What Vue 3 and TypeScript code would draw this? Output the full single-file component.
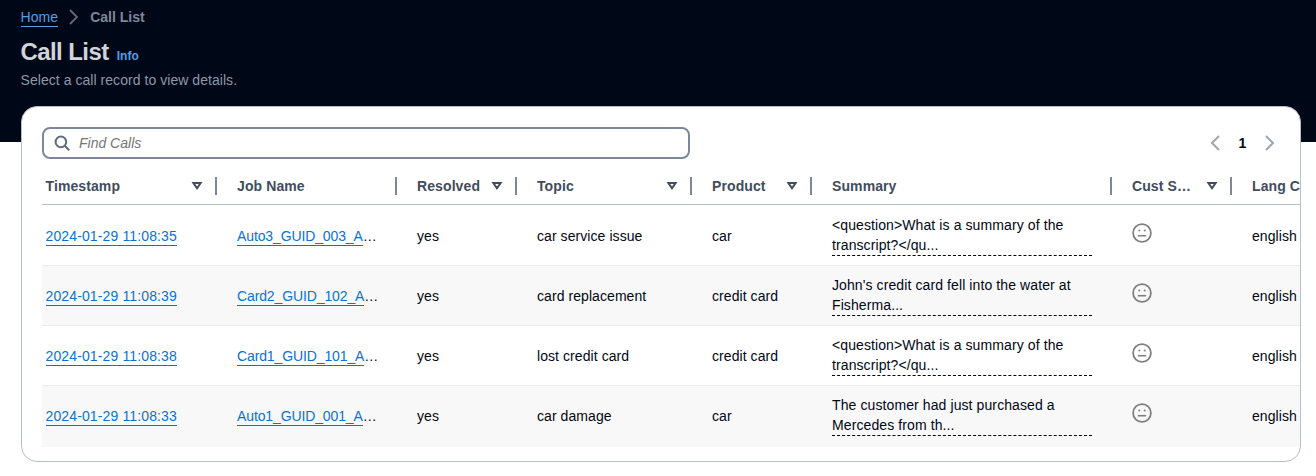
<script setup lang="ts">
interface Column {
  label: string
  filter: boolean
}

interface Call {
  timestamp: string
  job: string
  topic: string
  product: string
  summary: [string, string]
}

const columns: Column[] = [
  { label: 'Timestamp', filter: true },
  { label: 'Job Name', filter: false },
  { label: 'Resolved', filter: true },
  { label: 'Topic', filter: true },
  { label: 'Product', filter: true },
  { label: 'Summary', filter: false },
  { label: 'Cust S…', filter: true },
  { label: 'Lang C', filter: false },
]

const calls: Call[] = [
  { timestamp: '2024-01-29 11:08:35', job: 'Auto3_GUID_003_A', topic: 'car service issue', product: 'car', summary: ['<question>What is a summary of the', 'transcript?</qu...'] },
  { timestamp: '2024-01-29 11:08:39', job: 'Card2_GUID_102_A', topic: 'card replacement', product: 'credit card', summary: ["John's credit card fell into the water at", 'Fisherma...'] },
  { timestamp: '2024-01-29 11:08:38', job: 'Card1_GUID_101_A', topic: 'lost credit card', product: 'credit card', summary: ['<question>What is a summary of the', 'transcript?</qu...'] },
  { timestamp: '2024-01-29 11:08:33', job: 'Auto1_GUID_001_A', topic: 'car damage', product: 'car', summary: ['The customer had just purchased a', 'Mercedes from th...'] },
]
</script>

<template>
  <div class="page">
    <nav class="crumbs">
      <a class="home">Home</a>
      <svg class="crumb-arrow" width="16" height="16" viewBox="0 0 16 16"><path d="M4 1l7 7-7 7" /></svg>
      <span class="current">Call List</span>
    </nav>
    <header class="heading">
      <h1>Call List</h1>
      <a class="info">Info</a>
    </header>
    <p class="description">Select a call record to view details.</p>

    <main class="card">
      <div class="tools">
        <div class="search">
          <svg width="16" height="16" viewBox="0 0 16 16"><circle cx="6.9" cy="6.9" r="5.3" /><path d="M10.8 10.8l4.4 4.4" /></svg>
          <span>Find Calls</span>
        </div>
        <div class="pages">
          <svg width="16" height="16" viewBox="0 0 16 16"><path d="M12 1L5 8l7 7" /></svg>
          <b>1</b>
          <svg width="16" height="16" viewBox="0 0 16 16"><path d="M4 1l7 7-7 7" /></svg>
        </div>
      </div>

      <div class="table">
        <div class="row head">
          <div v-for="(col, i) in columns" :key="col.label" class="th">
            <span>{{ col.label }}</span>
            <svg v-if="col.filter" width="12" height="10" viewBox="0 0 12 10"><path d="M2.4 2h7.2L6 7.2z" /></svg>
            <i v-if="i < columns.length - 1" class="divider"></i>
          </div>
        </div>
        <div v-for="call in calls" :key="call.timestamp" class="row call">
          <div class="td"><a class="link stamp">{{ call.timestamp }}</a></div>
          <div class="td"><a class="link job">{{ call.job }}</a>…</div>
          <div class="td">yes</div>
          <div class="td">{{ call.topic }}</div>
          <div class="td">{{ call.product }}</div>
          <div class="td summary">
            <div class="excerpt">{{ call.summary[0] }}<br />{{ call.summary[1] }}</div>
          </div>
          <div class="td mood">
            <svg width="20" height="20" viewBox="0 0 20 20">
              <circle class="face" cx="10" cy="10" r="8.9" />
              <circle class="eye" cx="7.3" cy="7.6" r="1" />
              <circle class="eye" cx="12.7" cy="7.6" r="1" />
              <path class="mouth" d="M5.8 12.7h8.4" />
            </svg>
          </div>
          <div class="td">english</div>
        </div>
      </div>
    </main>
  </div>
</template>

<style>
body {
  background: #fff;
}
</style>

<style scoped>
.page {
  box-sizing: border-box;
  width: 1316px;
  height: 476px;
  padding: 7px 15px 0 20.5px;
  overflow: hidden;
  background: linear-gradient(#000716 142px, #fff 142px);
  color: #000716;
  font: 14px/20px "Liberation Sans", Arial, sans-serif;
  letter-spacing: 0.07px;
}
svg {
  display: block;
  flex: none;
  fill: none;
}
.crumbs {
  display: flex;
  align-items: center;
  height: 20px;
}
.home {
  height: 19px;
  border-bottom: 1px solid #539fe5;
  color: #539fe5;
}
.crumb-arrow {
  margin: 0 8px;
  stroke: #5f6b7a;
  stroke-width: 1.8;
}
.current {
  color: #7d8998;
  font-weight: 700;
  letter-spacing: 0;
}
.heading {
  display: flex;
  align-items: baseline;
  height: 30px;
  margin-top: 10px;
}
h1 {
  margin: 0;
  color: #d1d5db;
  font-size: 24px;
  line-height: 30px;
  letter-spacing: -0.58px;
}
.info {
  margin-left: 8px;
  color: #539fe5;
  font-size: 12px;
  font-weight: 700;
}
.description {
  margin: 3px 0 0;
  color: #8d99a8;
  letter-spacing: 0.05px;
}
.card {
  box-sizing: border-box;
  width: 1280px;
  height: 356px;
  margin: 16px 0 0 0.5px;
  overflow: hidden;
  border: 1px solid #b6bec9;
  border-radius: 16px;
  background: #fff;
}
.tools {
  display: flex;
  align-items: center;
  justify-content: space-between;
  margin: 20px 22px 0 20px;
}
.search {
  display: flex;
  align-items: center;
  box-sizing: border-box;
  width: 648px;
  height: 32px;
  padding-left: 10px;
  border: 2px solid #7d8998;
  border-radius: 8px;
  color: #757575;
  font-style: italic;
  letter-spacing: 0;
}
.search svg {
  margin-right: 9px;
  stroke: #5f6b7a;
  stroke-width: 2;
}
.pages {
  display: flex;
  align-items: center;
}
.pages svg {
  stroke: #9ba7b6;
  stroke-width: 2;
}
.pages b {
  width: 39px;
  text-align: center;
}
.pages svg:first-child {
  margin-right: 0;
}
.table {
  width: 1310px;
  margin-left: 20px;
}
.row {
  display: grid;
  grid-template-columns: 174.5px 180px 120px 175px 120px 300px 120px 120.5px;
  box-sizing: border-box;
}
.head {
  height: 46px;
  padding-top: 9px;
  border-bottom: 1px solid #b6bec9;
}
.th {
  position: relative;
  display: flex;
  align-items: center;
  justify-content: space-between;
  box-sizing: border-box;
  height: 36px;
  padding: 0 14px 0 20.5px;
  color: #414d5c;
  font-weight: 700;
  letter-spacing: 0.1px;
}
.th:first-child {
  padding-left: 3.5px;
}
.divider {
  position: absolute;
  top: 9px;
  right: -0.5px;
  width: 2px;
  height: 18px;
  background: #7d8998;
}
.th svg {
  stroke: #414d5c;
  stroke-width: 2;
}
.call {
  height: 60px;
  padding-top: 9px;
  border-bottom: 1px solid #e9ebed;
}
.call:nth-child(2) {
  height: 61px;
  padding-top: 10px;
}
.call:nth-child(odd) {
  background: #f8f8f8;
}
.call:last-child {
  height: 61px;
  border-bottom-color: #f8f8f8;
}
.td {
  padding: 11px 0 0 20.5px;
  white-space: nowrap;
}
.td:first-child {
  padding-left: 3.5px;
}
.link {
  display: inline-block;
  height: 19px;
  border-bottom: 1px solid #0972d3;
  color: #0972d3;
}
.stamp {
  letter-spacing: 0.13px;
}
.job {
  letter-spacing: -0.12px;
}
.td.summary {
  padding-top: 0;
}
.excerpt {
  width: 260px;
  border-bottom: 1px dashed #000716;
  letter-spacing: 0.1px;
}
.td.mood {
  padding-top: 8px;
}
.face {
  stroke: #808080;
  stroke-width: 1.8;
}
.mouth {
  stroke: #808080;
  stroke-width: 1.6;
}
.eye {
  fill: #808080;
}
</style>
